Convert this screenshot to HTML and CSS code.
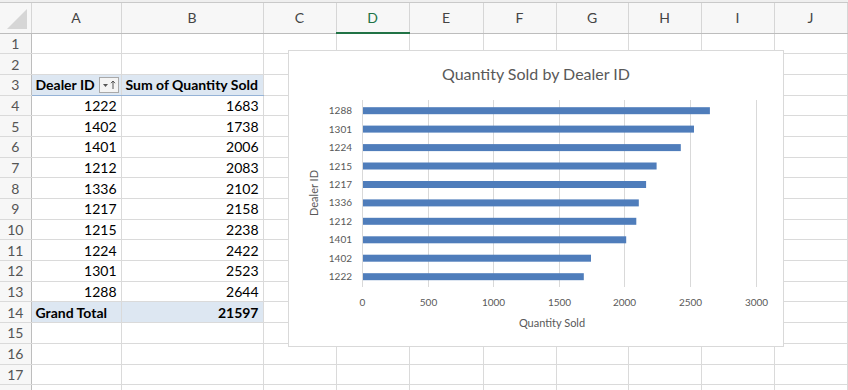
FILE: index.html
```html
<!doctype html>
<html lang="en">
  <head>
    <meta charset="UTF-8" />
    <title>Quantity Sold by Dealer ID</title>
    <link rel="stylesheet" href="styles.css">
  </head>
  <body>
    <div class="sheet">
      <div class="top-strip"></div>
      <table class="grid">
        <colgroup>
          <col style="width: 31px"><col style="width: 90px"><col style="width: 142px">
          <col style="width: 73px"><col style="width: 73px"><col style="width: 74px">
          <col style="width: 73px"><col style="width: 72px"><col style="width: 73px">
          <col style="width: 73px"><col style="width: 73px">
        </colgroup>
        <thead>
          <tr>
            <th class="corner"><span class="corner-mark"></span></th>
            <th>A</th><th>B</th><th>C</th><th class="active">D</th><th>E</th>
            <th>F</th><th>G</th><th>H</th><th>I</th><th>J</th>
          </tr>
        </thead>
        <tbody>
          <tr><td class="rh">1</td><td></td><td></td><td></td><td></td><td></td><td></td><td></td><td></td><td></td><td></td></tr>
          <tr><td class="rh">2</td><td></td><td></td><td></td><td></td><td></td><td></td><td></td><td></td><td></td><td></td></tr>
          <tr class="pivot-head">
            <td class="rh">3</td>
            <td class="label">
              <div class="head-cell">
                <span>Dealer ID</span>
                <span class="filter-btn">
                  <svg width="18" height="14" viewBox="0 0 18 14">
                    <path d="M3 6 L8 6 L5.5 9 Z" fill="#555"/>
                    <path d="M13 11 V3 M11 5.2 L13 3 L15 5.2" stroke="#555" stroke-width="1" fill="none"/>
                  </svg>
                </span>
              </div>
            </td>
            <td class="label">Sum of Quantity Sold</td>
            <td></td><td></td><td></td><td></td><td></td><td></td><td></td><td></td>
          </tr>
          <tr><td class="rh">4</td><td class="num">1222</td><td class="num">1683</td><td></td><td></td><td></td><td></td><td></td><td></td><td></td><td></td></tr>
          <tr><td class="rh">5</td><td class="num">1402</td><td class="num">1738</td><td></td><td></td><td></td><td></td><td></td><td></td><td></td><td></td></tr>
          <tr><td class="rh">6</td><td class="num">1401</td><td class="num">2006</td><td></td><td></td><td></td><td></td><td></td><td></td><td></td><td></td></tr>
          <tr><td class="rh">7</td><td class="num">1212</td><td class="num">2083</td><td></td><td></td><td></td><td></td><td></td><td></td><td></td><td></td></tr>
          <tr><td class="rh">8</td><td class="num">1336</td><td class="num">2102</td><td></td><td></td><td></td><td></td><td></td><td></td><td></td><td></td></tr>
          <tr><td class="rh">9</td><td class="num">1217</td><td class="num">2158</td><td></td><td></td><td></td><td></td><td></td><td></td><td></td><td></td></tr>
          <tr><td class="rh">10</td><td class="num">1215</td><td class="num">2238</td><td></td><td></td><td></td><td></td><td></td><td></td><td></td><td></td></tr>
          <tr><td class="rh">11</td><td class="num">1224</td><td class="num">2422</td><td></td><td></td><td></td><td></td><td></td><td></td><td></td><td></td></tr>
          <tr><td class="rh">12</td><td class="num">1301</td><td class="num">2523</td><td></td><td></td><td></td><td></td><td></td><td></td><td></td><td></td></tr>
          <tr><td class="rh">13</td><td class="num">1288</td><td class="num">2644</td><td></td><td></td><td></td><td></td><td></td><td></td><td></td><td></td></tr>
          <tr class="pivot-total">
            <td class="rh">14</td><td class="label">Grand Total</td><td class="num label">21597</td>
            <td></td><td></td><td></td><td></td><td></td><td></td><td></td><td></td>
          </tr>
          <tr><td class="rh">15</td><td></td><td></td><td></td><td></td><td></td><td></td><td></td><td></td><td></td><td></td></tr>
          <tr><td class="rh">16</td><td></td><td></td><td></td><td></td><td></td><td></td><td></td><td></td><td></td><td></td></tr>
          <tr><td class="rh">17</td><td></td><td></td><td></td><td></td><td></td><td></td><td></td><td></td><td></td><td></td></tr>
          <tr><td class="rh"></td><td></td><td></td><td></td><td></td><td></td><td></td><td></td><td></td><td></td><td></td></tr>
        </tbody>
      </table>

      <div class="chart">
        <div class="chart-title">Quantity Sold by Dealer ID</div>
        <svg class="plot" width="494" height="251" viewBox="0 0 494 251">
          <g stroke="#d9d9d9" stroke-width="1">
            <line x1="73.5" y1="5" x2="73.5" y2="192"/>
            <line x1="139.5" y1="5" x2="139.5" y2="192"/>
            <line x1="204.5" y1="5" x2="204.5" y2="192"/>
            <line x1="270.5" y1="5" x2="270.5" y2="192"/>
            <line x1="335.5" y1="5" x2="335.5" y2="192"/>
            <line x1="401.5" y1="5" x2="401.5" y2="192"/>
            <line x1="467.5" y1="5" x2="467.5" y2="192"/>
          </g>
          <g fill="#4f7dbb">
            <rect x="74" y="12.2" width="346.9" height="7"/>
            <rect x="74" y="30.6" width="331.0" height="7"/>
            <rect x="74" y="49.1" width="317.8" height="7"/>
            <rect x="74" y="67.5" width="293.6" height="7"/>
            <rect x="74" y="86.0" width="283.1" height="7"/>
            <rect x="74" y="104.4" width="275.8" height="7"/>
            <rect x="74" y="122.8" width="273.3" height="7"/>
            <rect x="74" y="141.3" width="263.2" height="7"/>
            <rect x="74" y="159.7" width="228.0" height="7"/>
            <rect x="74" y="178.2" width="220.8" height="7"/>
          </g>
          <g class="cat-labels" text-anchor="end">
            <text x="63" y="19.2">1288</text>
            <text x="63" y="37.6">1301</text>
            <text x="63" y="56.1">1224</text>
            <text x="63" y="74.5">1215</text>
            <text x="63" y="93.0">1217</text>
            <text x="63" y="111.4">1336</text>
            <text x="63" y="129.8">1212</text>
            <text x="63" y="148.3">1401</text>
            <text x="63" y="166.7">1402</text>
            <text x="63" y="185.2">1222</text>
          </g>
          <g class="val-labels" text-anchor="middle">
            <text x="73.5" y="211">0</text>
            <text x="139.5" y="211">500</text>
            <text x="204.5" y="211">1000</text>
            <text x="270.5" y="211">1500</text>
            <text x="335.5" y="211">2000</text>
            <text x="401.5" y="211">2500</text>
            <text x="467.5" y="211">3000</text>
          </g>
          <text class="axis-title" x="263" y="232" text-anchor="middle">Quantity Sold</text>
          <text class="axis-title" x="0" y="0" text-anchor="middle" transform="translate(29 98) rotate(-90)">Dealer ID</text>
        </svg>
      </div>
    </div>
  </body>
</html>
```

FILE: styles.css
```css
body {
  margin: 0;
  width: 848px;
  height: 390px;
  overflow: hidden;
  background: #ffffff;
  font-family: Lato, "Open Sans", sans-serif;
  color: #000;
}

.sheet {
  position: relative;
}

.top-strip {
  height: 2px;
  background: #efefef;
  border-bottom: 1px solid #c9c9c9;
}

.grid {
  border-collapse: collapse;
  table-layout: fixed;
  width: 847px;
  font-size: 14px;
}

.grid th {
  height: 29px;
  padding: 0;
  background: #f7f7f7;
  color: #444;
  font-weight: normal;
  font-size: 14px;
  border-right: 1px solid #d6d6d6;
  border-bottom: 1px solid #bdbdbd;
}

.grid th.active {
  color: #217346;
  border-bottom: 2px solid #217346;
}

.grid th.corner {
  position: relative;
}

.corner-mark {
  position: absolute;
  right: 4px;
  bottom: 4px;
  width: 0;
  height: 0;
  border-left: 20px solid transparent;
  border-bottom: 20px solid #d6d6d6;
}

.grid tr {
  height: 20.7px;
}

.grid td {
  padding: 0 4px;
  border: 1px solid #dadada;
  white-space: nowrap;
  overflow: hidden;
}

.grid td.rh {
  padding: 0;
  text-align: center;
  background: #f7f7f7;
  color: #555;
  border-left: none;
  border-right: 1px solid #bdbdbd;
}

.grid td.num {
  text-align: right;
}

.grid td.label {
  font-weight: 700;
}

.pivot-head td:nth-child(2),
.pivot-head td:nth-child(3) {
  background: #dde7f2;
  border-bottom: 1px solid #95b3d7;
}

.pivot-total td:nth-child(2),
.pivot-total td:nth-child(3) {
  background: #dde7f2;
  border-top: 1px solid #95b3d7;
}

.head-cell {
  display: flex;
  align-items: center;
  justify-content: space-between;
}

.filter-btn {
  display: flex;
  width: 18px;
  height: 14px;
  margin-right: -2px;
  border: 1px solid #a9a9a9;
  background: #f4f4f4;
}

.chart {
  position: absolute;
  left: 288px;
  top: 50px;
  width: 496px;
  height: 297px;
  box-sizing: border-box;
  border: 1px solid #d9d9d9;
  background: #ffffff;
  display: flex;
  flex-direction: column;
}

.chart-title {
  height: 44px;
  padding-top: 13px;
  box-sizing: border-box;
  text-align: center;
  font-size: 16px;
  line-height: 20px;
  color: #595959;
}

.plot {
  display: block;
}

.cat-labels,
.val-labels {
  font-family: Lato, sans-serif;
  font-size: 10px;
  fill: #595959;
}

.axis-title {
  font-family: Lato, sans-serif;
  font-size: 11px;
  fill: #595959;
}
```
